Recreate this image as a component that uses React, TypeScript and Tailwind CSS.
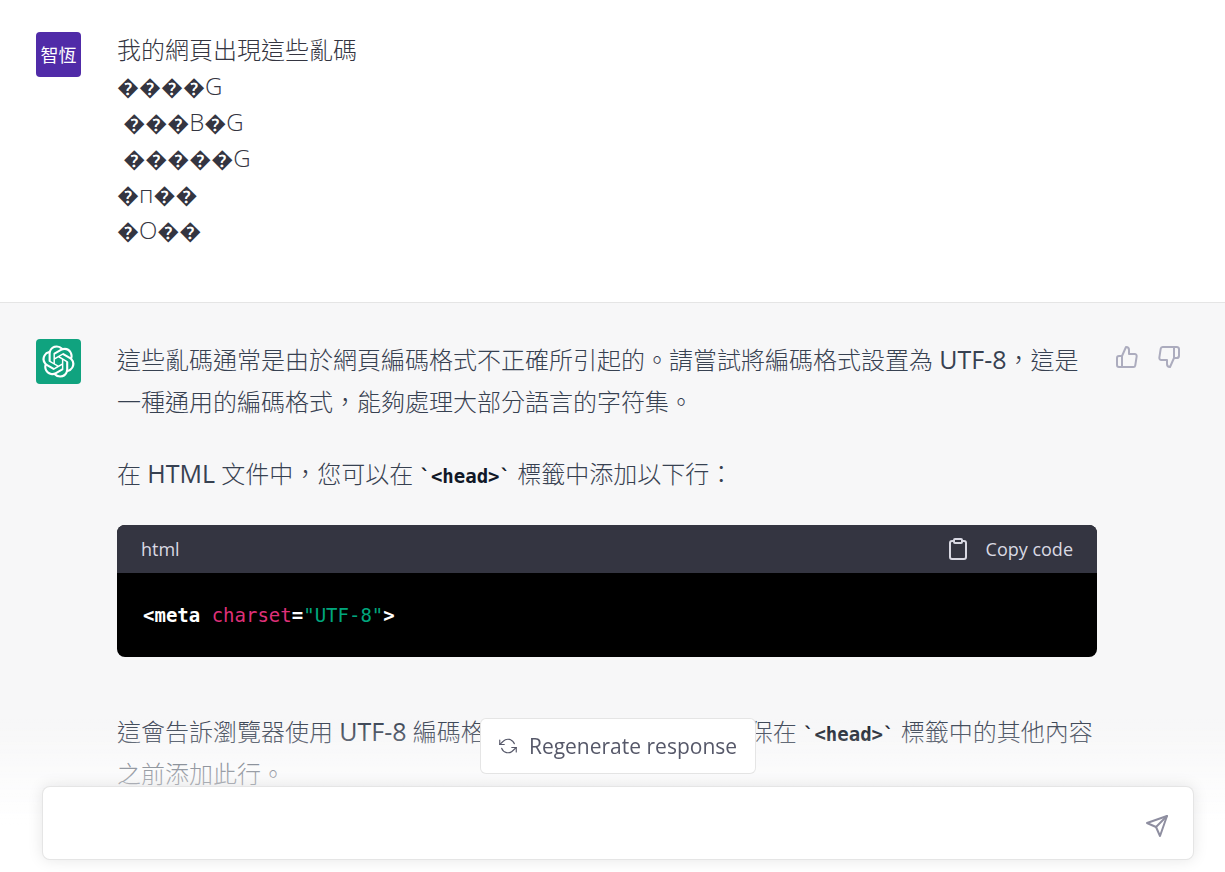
import type { ReactNode } from 'react'
import { FiClipboard, FiThumbsDown, FiThumbsUp } from 'react-icons/fi'

const garbled = ['\uFFFD\uFFFD\uFFFD\uFFFDG', ' \uFFFD\uFFFD\uFFFDB\uFFFDG', ' \uFFFD\uFFFD\uFFFD\uFFFD\uFFFDG', '\uFFFDп\uFFFD\uFFFD', '\uFFFDO\uFFFD\uFFFD']

function OpenAILogo() {
  return (
    <svg width="33" height="33" viewBox="0 0 41 41" fill="none" aria-hidden="true">
      <path
        d="M37.532 16.87a9.963 9.963 0 0 0-.856-8.184 10.078 10.078 0 0 0-10.855-4.835A9.964 9.964 0 0 0 18.306.5a10.079 10.079 0 0 0-9.614 6.977 9.967 9.967 0 0 0-6.664 4.834 10.08 10.08 0 0 0 1.24 11.817 9.965 9.965 0 0 0 .856 8.185 10.079 10.079 0 0 0 10.855 4.835 9.965 9.965 0 0 0 7.516 3.35 10.078 10.078 0 0 0 9.617-6.981 9.967 9.967 0 0 0 6.663-4.834 10.079 10.079 0 0 0-1.243-11.813zM22.498 37.886a7.474 7.474 0 0 1-4.799-1.735c.061-.033.168-.091.237-.134l7.964-4.6a1.294 1.294 0 0 0 .655-1.134V19.054l3.366 1.944a.12.12 0 0 1 .066.092v9.299a7.505 7.505 0 0 1-7.49 7.496zM6.392 31.006a7.471 7.471 0 0 1-.894-5.023c.06.036.162.099.237.141l7.964 4.6a1.297 1.297 0 0 0 1.308 0l9.724-5.614v3.888a.12.12 0 0 1-.048.103l-8.051 4.649a7.504 7.504 0 0 1-10.24-2.744zM4.297 13.62A7.469 7.469 0 0 1 8.2 10.333c0 .068-.004.19-.004.274v9.201a1.294 1.294 0 0 0 .654 1.132l9.723 5.614-3.366 1.944a.12.12 0 0 1-.114.01L7.04 23.856a7.504 7.504 0 0 1-2.743-10.237zm27.658 6.437l-9.724-5.615 3.367-1.943a.121.121 0 0 1 .113-.01l8.052 4.648a7.498 7.498 0 0 1-1.158 13.528v-9.476a1.293 1.293 0 0 0-.65-1.132zm3.35-5.043c-.059-.037-.162-.099-.236-.141l-7.965-4.6a1.298 1.298 0 0 0-1.308 0l-9.723 5.614v-3.888a.12.12 0 0 1 .048-.103l8.05-4.645a7.497 7.497 0 0 1 11.135 7.763zm-21.063 6.929l-3.367-1.944a.12.12 0 0 1-.065-.092v-9.299a7.497 7.497 0 0 1 12.293-5.756 6.94 6.94 0 0 0-.236.134l-7.965 4.6a1.294 1.294 0 0 0-.654 1.132l-.006 11.225zm1.829-3.943l4.33-2.501 4.332 2.5v5l-4.331 2.5-4.331-2.5V18z"
        fill="currentColor"
      />
    </svg>
  )
}

function RefreshIcon() {
  return (
    <svg width="18" height="18" viewBox="0 0 24 24" fill="none" stroke="currentColor" strokeWidth="1.5" strokeLinecap="round" strokeLinejoin="round" aria-hidden="true">
      <polyline points="1 4 1 10 7 10" />
      <polyline points="23 20 23 14 17 14" />
      <path d="M20.49 9A9 9 0 0 0 5.64 5.64L1 10m22 4l-4.64 4.36A9 9 0 0 1 3.51 15" />
    </svg>
  )
}

function SendIcon() {
  return (
    <svg width="24" height="24" viewBox="0 0 24 24" fill="none" stroke="currentColor" strokeWidth="2" strokeLinecap="round" strokeLinejoin="round" aria-hidden="true">
      <line x1="22" y1="2" x2="11" y2="13" />
      <polygon points="22 2 15 22 11 13 2 9 22 2" />
    </svg>
  )
}

function InlineCode({ children }: { children: ReactNode }) {
  return <code className="font-['DejaVu_Sans_Mono',monospace] text-[19px] leading-5 font-bold text-[#111827]">`{children}`</code>
}

// Latin words are set a little larger and heavier than the Chinese around them
function Latin({ children }: { children: ReactNode }) {
  return <span className="text-[25px] leading-6 font-normal">{children}</span>
}

function GarbledLine({ text }: { text: string }) {
  return (
    <p>
      {text.split(/(\uFFFD+)/).map((part, i) => (
        <span key={i} className={part.startsWith('\uFFFD') ? 'text-[22px] leading-6' : ''}>
          {part}
        </span>
      ))}
    </p>
  )
}

export default function App() {
  return (
    <div lang="zh-TW" className="flex min-h-screen flex-col bg-white font-['Open_Sans','Noto_Sans_CJK_TC',sans-serif] text-2xl font-light">
      <section className="flex gap-9 border-b border-black/10 px-9 pt-8 pb-[54px] text-[#343541]">
        <div className="flex size-[45px] shrink-0 items-center justify-center rounded-sm bg-[#502ba8] text-lg font-normal text-white">智恆</div>
        <div className="min-w-0 flex-1 leading-9 whitespace-pre-wrap">
          <p>我的網頁出現這些亂碼</p>
          {garbled.map((line) => (
            <GarbledLine key={line} text={line} />
          ))}
        </div>
      </section>

      <section className="flex flex-1 gap-9 bg-[#f7f7f8] pt-9 pr-11 pb-12 pl-9 text-[#374151]">
        <div className="flex size-[45px] shrink-0 items-center justify-center rounded-sm bg-[#10a37f] text-white">
          <OpenAILogo />
        </div>
        <div className="flex min-w-0 flex-1 items-start gap-[18px]">
          <div className="min-w-0 flex-1 leading-[42px]">
            <p>
              這些亂碼通常是由於網頁編碼格式不正確所引起的。請嘗試將編碼格式設置為 <Latin>UTF-8</Latin>，這是一種通用的編碼格式，能夠處理大部分語言的字符集。
            </p>
            <p className="mt-[30px]">
              在 <Latin>HTML</Latin> 文件中，您可以在 <InlineCode>{'<head>'}</InlineCode> 標籤中添加以下行：
            </p>
            <div className="mt-[30px] overflow-hidden rounded-lg bg-black">
              <div className="flex h-12 items-center justify-between bg-[#343541] px-6 text-lg font-normal text-[#d9d9e3]">
                <span>html</span>
                <button type="button" className="flex items-center gap-4">
                  <FiClipboard size={24} />
                  Copy code
                </button>
              </div>
              <pre className="px-[26px] py-6 text-[19px] leading-9 font-normal text-white">
                <code className="block font-['DejaVu_Sans_Mono',monospace]">
                  <b>&lt;meta</b> <span className="text-[#df3079]">charset</span>
                  <b>=</b>
                  <span className="text-[#00a67d]">"UTF-8"</span>
                  <b>&gt;</b>
                </code>
              </pre>
            </div>
            <p className="mt-[54px]">
              這會告訴瀏覽器使用 <Latin>UTF-8</Latin> 編碼格式來解析您的網頁。請確保在 <InlineCode>{'<head>'}</InlineCode> 標籤中的其他內容之前添加此行。
            </p>
          </div>
          <div className="flex gap-[18px] pt-1.5 text-[#acacbe]">
            <button type="button" aria-label="Good response">
              <FiThumbsUp size={24} />
            </button>
            <button type="button" aria-label="Bad response">
              <FiThumbsDown size={24} />
            </button>
          </div>
        </div>
      </section>

      <form className="fixed inset-x-0 bottom-0 flex flex-col items-center gap-3 bg-linear-to-b from-transparent to-white to-70% pr-[31px] pb-3 pl-[42px]">
        <button type="button" className="flex h-14 items-center gap-3 rounded-md border border-black/10 bg-white px-[18px] text-[21px] font-normal text-[#565869]">
          <RefreshIcon />
          Regenerate response
        </button>
        <div className="flex h-[74px] w-full items-center rounded-lg border border-black/10 bg-white px-6 pt-1.5 shadow-[0_0_15px_rgba(0,0,0,0.10)]">
          <input type="text" aria-label="Message" className="min-w-0 flex-1 outline-none" />
          <button type="submit" aria-label="Send message" className="text-[#8e8ea0]">
            <SendIcon />
          </button>
        </div>
      </form>
    </div>
  )
}
